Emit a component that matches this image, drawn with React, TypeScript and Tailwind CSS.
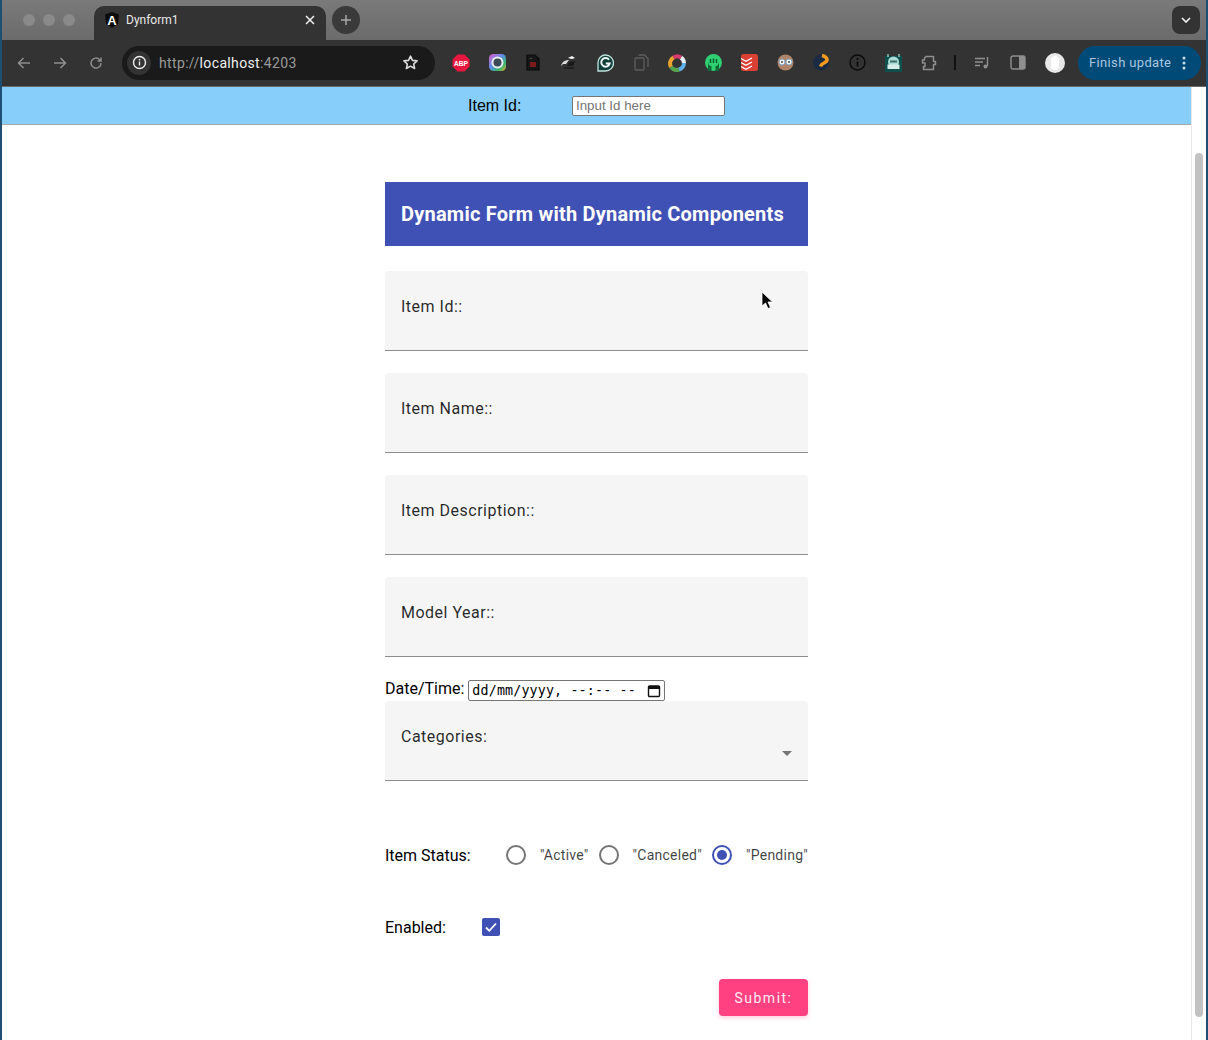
import React from "react";

const roboto = "font-['Roboto',sans-serif]";

function Field({ label, select }: { label: string; select?: boolean }) {
  return (
    <div className="relative h-20 shrink-0 rounded-t bg-[#f5f5f5] border-b border-[#8c8c8c] px-4 pt-[27px]">
      <div className="text-base leading-[18px] tracking-[0.5px] text-black/85">{label}</div>
      {select && <div className="absolute right-4 top-[50px] w-0 h-0 border-l-[5px] border-r-[5px] border-t-[5px] border-l-transparent border-r-transparent border-t-[#757575]" />}
    </div>
  );
}

function Radio({ label, on }: { label: string; on?: boolean }) {
  return (
    <div className="flex items-center">
      <div className={`w-5 h-5 rounded-full border-2 flex items-center justify-center ${on ? "border-[#3f51b5]" : "border-[#757575]"}`}>
        {on && <div className="w-[10px] h-[10px] rounded-full bg-[#3f51b5]" />}
      </div>
      <span className="ml-[14px] text-sm tracking-[0.25px] text-black/75">{label}</span>
    </div>
  );
}

function Ext({ children, x }: { children: React.ReactNode; x: string }) {
  return <div className={`flex items-center justify-center w-[18px] h-[18px] shrink-0 ${x}`}>{children}</div>;
}

function Toolbar() {
  return (
    <div className="h-[47px] shrink-0 bg-[#333333] border-b border-[#6a6a6a] flex items-center pb-[1px] text-[#9a9a9a]">
      <svg className="ml-[14px] shrink-0" width="16" height="16" viewBox="0 0 16 16" fill="none" stroke="#8f8f8f" strokeWidth="1.5"><path d="M14 8H2.500M7.500 3l-5 5 5 5" /></svg>
      <svg className="ml-[20px] shrink-0" width="16" height="16" viewBox="0 0 16 16" fill="none" stroke="#8f8f8f" strokeWidth="1.5"><path d="M2 8h11.500M8.500 3l5 5-5 5" /></svg>
      <svg className="ml-[20px] shrink-0" width="16" height="16" viewBox="0 0 16 16" fill="none" stroke="#8f8f8f" strokeWidth="1.5"><path d="M13 8a5 5 0 1 1-1.500-3.500L13 6M13 2.500V6H9.500" /></svg>
      <div className="ml-[18px] w-[313px] h-[34px] rounded-full bg-[#1a1a1a] flex items-center shrink-0 pl-[5px]">
        <div className="w-6 h-6 rounded-full bg-[#333333] flex items-center justify-center">
          <svg width="15" height="15" viewBox="0 0 15 15" fill="none" stroke="#eeeeee" strokeWidth="1.4"><circle cx="7.500" cy="7.500" r="6" /><path d="M7.500 6.600v4M7.500 4v1.400" /></svg>
        </div>
        <div className={`ml-2 text-sm tracking-[0.35px] text-[#9a9a9a] ${roboto}`}>http://<span className="text-[#f0f0f0]">localhost</span>:4203</div>
        <svg className="ml-auto mr-[16px]" width="17" height="17" viewBox="0 0 24 24" fill="none" stroke="#dddddd" strokeWidth="2.2" strokeLinejoin="round"><path d="M12 3l2.800 6 6.500.7-4.800 4.400 1.300 6.400-5.800-3.300-5.800 3.300 1.300-6.400L2.700 9.700 9.200 9z" /></svg>
      </div>
      <Ext x="ml-[17px]">
        <svg width="18" height="18" viewBox="0 0 18 18"><path d="M5.500 0.500h7L17.500 5.500v7L12.500 17.500h-7L0.500 12.500v-7z" fill="#e8173f" /><text x="9" y="12" textAnchor="middle" fontSize="8" fontWeight="700" fill="#fff" fontFamily="Liberation Sans" textLength="14" lengthAdjust="spacingAndGlyphs">ABP</text></svg>
      </Ext>
      <Ext x="ml-[18px]">
        <svg width="17" height="17" viewBox="0 0 17 17"><defs><linearGradient id="cg" x1="0" y1="0" x2="1" y2="1"><stop offset="0" stopColor="#e85bc8" /><stop offset="0.45" stopColor="#5a8fe8" /><stop offset="0.75" stopColor="#38b56a" /><stop offset="1" stopColor="#f2b030" /></linearGradient></defs><rect width="17" height="17" rx="4.500" fill="url(#cg)" /><circle cx="8.500" cy="8.500" r="6" fill="#e9eef2" /><circle cx="8.500" cy="8.500" r="4" fill="#3c4a57" /></svg>
      </Ext>
      <Ext x="ml-[18px]">
        <svg width="14" height="17" viewBox="0 0 14 17" fill="#161616" stroke="#0a0a0a" strokeWidth="1.200"><path d="M1 1h8l4 4v11H1z" /><path d="M3.500 4.500h3" stroke="#444" /><rect x="4" y="8" width="6" height="5" fill="#7d1a1a" stroke="none" /></svg>
      </Ext>
      <Ext x="ml-[18px]">
        <svg width="18" height="15" viewBox="0 0 18 15"><path d="M1 11C2 7 5 5 9 5L6 9 3 9z" fill="#dcdcdc" /><path d="M8 3l4-2 3 2-3 1z" fill="#ffffff" /><path d="M9 7l6-1-2 5H7z" fill="#1a1a1a" /><path d="M4 13h10" stroke="#1d1d1d" strokeWidth="1.500" /></svg>
      </Ext>
      <Ext x="ml-[18px]">
        <svg width="17" height="18" viewBox="0 0 17 18" fill="none"><path d="M8.500 1a7.500 7.500 0 0 0-7.500 7.500V17h7.500a8 8 0 0 0 0-16z" fill="#133f3b" stroke="#bfe3dc" strokeWidth="1.300" /><path d="M12 5.800A4.300 4.300 0 1 0 12.700 9.500H8.800" stroke="#f2fbf9" strokeWidth="1.900" /></svg>
      </Ext>
      <Ext x="ml-[18px]">
        <svg width="15" height="17" viewBox="0 0 15 17" fill="none" stroke="#5e5e5e" strokeWidth="1.300"><rect x="1" y="4" width="9" height="12" rx="1" /><path d="M4.500 1h6l3.500 3.500V13" /></svg>
      </Ext>
      <Ext x="ml-[18px]">
        <svg width="18" height="18" viewBox="0 0 18 18" fill="none" strokeWidth="4"><path d="M5.500 3.500A7 7 0 0 0 3 13" stroke="#e9a52c" /><path d="M3 13A7 7 0 0 0 11 15.500" stroke="#57a24f" /><path d="M11 15.500A7 7 0 0 0 16 9" stroke="#5fb3ea" /><path d="M16 9A7 7 0 0 0 13 3.500" stroke="#e8edf2" /><path d="M13 3.500A7 7 0 0 0 5.500 3.500" stroke="#d83a6e" /></svg>
      </Ext>
      <Ext x="ml-[18px]">
        <svg width="17" height="17" viewBox="0 0 17 17"><circle cx="8.500" cy="8.500" r="8.500" fill="#2fd072" /><path d="M5.500 5v4M8.500 4.500v4.500M11.500 5v4" stroke="#0d5a30" strokeWidth="1.400" /><path d="M3 7c0 4 2 5 3.500 5l0 5H3z" fill="#0f6a38" /><path d="M14 7c0 4-2 5-3.500 5l0 5H14z" fill="#0f6a38" /></svg>
      </Ext>
      <Ext x="ml-[18px]">
        <svg width="17" height="17" viewBox="0 0 17 17"><rect width="17" height="17" rx="2.500" fill="#db4035" /><path d="M0 4.500l5 2.700 6-3.200M0 8.500l5 2.700 6-3.200M0 12.500l5 2.700 6-3.200" stroke="#fff" strokeWidth="1.300" fill="none" /></svg>
      </Ext>
      <Ext x="ml-[18px]">
        <svg width="17" height="17" viewBox="0 0 17 17"><circle cx="8.500" cy="8.500" r="8" fill="#b08468" /><circle cx="5" cy="8" r="3" fill="#f4f4f4" stroke="#7fa8c9" /><circle cx="12" cy="8" r="3" fill="#f4f4f4" stroke="#7fa8c9" /><circle cx="5" cy="8" r="1" fill="#4a4a4a" /><circle cx="12" cy="8" r="1" fill="#4a4a4a" /></svg>
      </Ext>
      <Ext x="ml-[18px]">
        <svg width="17" height="17" viewBox="0 0 17 17"><circle cx="8" cy="8.500" r="8" fill="#1c2b44" /><path d="M9 1.500c6 1.500 6.500 5.500 2 7.500 -2.500 1 -3 2 -3.500 3.500" stroke="#f59b1e" strokeWidth="3.500" fill="none" /></svg>
      </Ext>
      <Ext x="ml-[18px]">
        <svg width="17" height="17" viewBox="0 0 17 17" fill="none" stroke="#0b0b0b" strokeWidth="1.400"><circle cx="8.500" cy="8.500" r="7.500" /><path d="M8.500 7.500v5M8.500 4v2" strokeWidth="1.700" /></svg>
      </Ext>
      <Ext x="ml-[18px]">
        <svg width="17" height="18" viewBox="0 0 17 18"><rect y="2" width="17" height="16" fill="#0f4f4c" /><path d="M3 0v3M14 0v3" stroke="#a9dcd4" strokeWidth="1.200" /><circle cx="8.500" cy="8" r="5.500" fill="#a9dcd4" /><rect x="2.500" y="10.500" width="12" height="4.500" fill="#d8ece8" /><rect x="5" y="6.500" width="7" height="2" fill="#3e6b65" /></svg>
      </Ext>
      <Ext x="ml-[18px]">
        <svg width="16" height="16" viewBox="0 0 16 16" fill="none" stroke="#8f8f8f" strokeWidth="1.500" strokeLinejoin="round"><path d="M1.500 5h2V3L5 1.500h7.500v5h2v3h-2v5H2.500v-3H4V8H1.500z" /></svg>
      </Ext>
      <div className="ml-[16px] w-[2px] h-[15px] bg-[#111] shrink-0" />
      <Ext x="ml-[17px]">
        <svg width="16" height="14" viewBox="0 0 16 14" fill="none" stroke="#8f8f8f" strokeWidth="1.400"><path d="M1 2.500h10M1 6h8M1 9.500h5" /><path d="M13.500 1v9" /><circle cx="11.500" cy="10.500" r="2" fill="#8f8f8f" stroke="none" /></svg>
      </Ext>
      <Ext x="ml-[18px]">
        <svg width="16" height="15" viewBox="0 0 16 15"><rect x="1" y="1" width="14" height="13" rx="2" fill="none" stroke="#8f8f8f" strokeWidth="1.400" /><rect x="9" y="1" width="6" height="13" fill="#8f8f8f" /></svg>
      </Ext>
      <div className="ml-[18px] w-5 h-5 rounded-full bg-[#e8e8e8] shrink-0 flex items-center justify-center">
        <div className="w-[8px] h-[14px] rounded-full bg-white" />
      </div>
      <div className={`ml-[13px] w-[123px] h-[34px] rounded-full bg-[#004a77] flex items-center pl-[11px] shrink-0 text-[13px] tracking-[0.35px] text-[#a8c7e0] ${roboto}`}>
        Finish update
        <svg className="ml-[11px]" width="4" height="14" viewBox="0 0 4 14" fill="#c9dcea"><circle cx="2" cy="2" r="1.500" /><circle cx="2" cy="7" r="1.500" /><circle cx="2" cy="12" r="1.500" /></svg>
      </div>
    </div>
  );
}

function TabStrip() {
  return (
    <div className="h-10 shrink-0 bg-gradient-to-b from-[#7a7a7a] to-[#6b6b6b] flex items-start relative">
      <div className="flex gap-[8px] ml-[21px] mt-[14px]">
        <div className="w-3 h-3 rounded-full bg-[#8a8a8a]" />
        <div className="w-3 h-3 rounded-full bg-[#8a8a8a]" />
        <div className="w-3 h-3 rounded-full bg-[#8a8a8a]" />
      </div>
      <div className={`ml-[19px] mt-[6px] w-[232px] h-[34px] rounded-t-[10px] bg-[#333333] flex items-center pl-[10px] pr-[11px] pb-[6px] text-xs text-[#e8e8e8] ${roboto}`}>
        <svg width="16" height="16" viewBox="0 0 16 16"><path d="M8 0L1 2.500l1 9.500L8 16l6-4 1-9.500z" fill="#0c0c0c" /><text x="8" y="12.500" textAnchor="middle" fontSize="13" fontWeight="700" fill="#fff" fontFamily="Liberation Sans">A</text></svg>
        <span className="ml-[6px]">Dynform1</span>
        <svg className="ml-auto" width="10" height="10" viewBox="0 0 10 10" stroke="#f0f0f0" strokeWidth="1.500"><path d="M1 1l8 8M9 1L1 9" /></svg>
      </div>
      <div className="ml-[6px] mt-[6px] w-7 h-7 rounded-full bg-[#3a3a3a] flex items-center justify-center">
        <svg width="12" height="12" viewBox="0 0 12 12" stroke="#a8a8a8" strokeWidth="1.500"><path d="M6 1v10M1 6h10" /></svg>
      </div>
      <div className="ml-auto mr-[6px] mt-[6px] w-7 h-7 rounded-[8px] bg-[#333333] flex items-center justify-center">
        <svg width="10" height="6" viewBox="0 0 10 6" fill="none" stroke="#f5f5f5" strokeWidth="1.600"><path d="M1 1l4 4 4-4" /></svg>
      </div>
    </div>
  );
}

export default function App() {
  return (
    <div className="relative w-[1208px] h-[1040px] overflow-hidden flex flex-col bg-white border-x-2 border-x-[#1e4f73] font-['Roboto',sans-serif]">
      <TabStrip />
      <Toolbar />
      <div className="flex flex-1 min-h-0">
        <main className="flex-1 min-w-0 overflow-hidden">
          <div className="h-[38px] bg-[#87cefa] border-b border-[#a3a9ad] flex items-center pl-[466px] font-['Liberation_Sans',sans-serif]">
            <span className="text-base text-black w-[104px]">Item Id:</span>
            <input
              readOnly
              placeholder="Input Id here"
              className="w-[153px] h-5 bg-white border border-[#767676] rounded-[2px] px-[3px] text-[13.33px] placeholder:text-[#757575] outline-none"
            />
          </div>
          <form className="w-[423px] mx-auto mt-[57px] flex flex-col">
            <h1 className="h-16 shrink-0 bg-[#3f51b5] text-white text-xl font-bold tracking-[0.22px] flex items-center pl-4 mb-[25px]">Dynamic Form with Dynamic Components</h1>
            <div className="flex flex-col gap-[22px]">
              <Field label="Item Id::" />
              <Field label="Item Name::" />
              <Field label="Item Description::" />
              <Field label="Model Year::" />
            </div>
            <div className="h-[44px] shrink-0 flex items-end text-base">
              <span className="text-black leading-[20px] mb-[2px]">Date/Time:</span>
              <div className="ml-[4px] w-[197px] h-[21px] border border-[#767676] rounded-[2px] flex items-center pl-[3px] pr-[2px] text-[13.33px] text-black font-['DejaVu_Sans_Mono',monospace] tracking-[0.15px] whitespace-pre">
                dd/mm/yyyy, --:-- --
                <svg className="ml-auto mr-[1px]" width="14" height="14" viewBox="0 0 14 14"><rect x="1.500" y="2" width="11" height="10.500" rx="1" fill="none" stroke="#111" strokeWidth="1.400" /><rect x="1.500" y="2" width="11" height="3" fill="#111" /></svg>
              </div>
            </div>
            <Field label="Categories:" select />
            <div className="mt-[64px] flex items-center h-5">
              <span className="text-base text-black mt-[1px]">Item Status:</span>
              <div className="ml-auto flex items-center gap-[10px]">
                <Radio label={'"Active"'} />
                <Radio label={'"Canceled"'} />
                <Radio label={'"Pending"'} on />
              </div>
            </div>
            <div className="mt-[52px] flex items-center h-5">
              <span className="text-base text-black w-[97px] mt-[1px]">Enabled:</span>
              <div className="w-[18px] h-[18px] rounded-[2px] bg-[#3f51b5] flex items-center justify-center">
                <svg width="14" height="14" viewBox="0 0 14 14" fill="none" stroke="#fff" strokeWidth="1.800"><path d="M2 7.500l3.300 3.300L12 3.500" /></svg>
              </div>
            </div>
            <div className="mt-[42px] flex justify-end">
              <button type="button" className="w-[89px] h-[37px] rounded bg-[#ff4081] text-white/90 text-sm font-normal tracking-[1.5px] shadow-[0_2px_4px_rgba(255,64,129,0.25)]">Submit:</button>
            </div>
          </form>
        </main>
        <div className="w-[15px] shrink-0 bg-white border-l border-[#e8e8e8] pt-[66px] px-[3px]">
          <div className="w-2 h-[864px] rounded-full bg-[#c2c2c2]" />
        </div>
      </div>
      <svg className="absolute left-[758px] top-[291px]" width="14" height="20" viewBox="0 0 14 20"><path d="M2 1v14l3.500-3 2.500 5.500 2.500-1L8 11h4.500z" fill="#000" stroke="#ffffff" strokeWidth="0.800" /></svg>
    </div>
  );
}
